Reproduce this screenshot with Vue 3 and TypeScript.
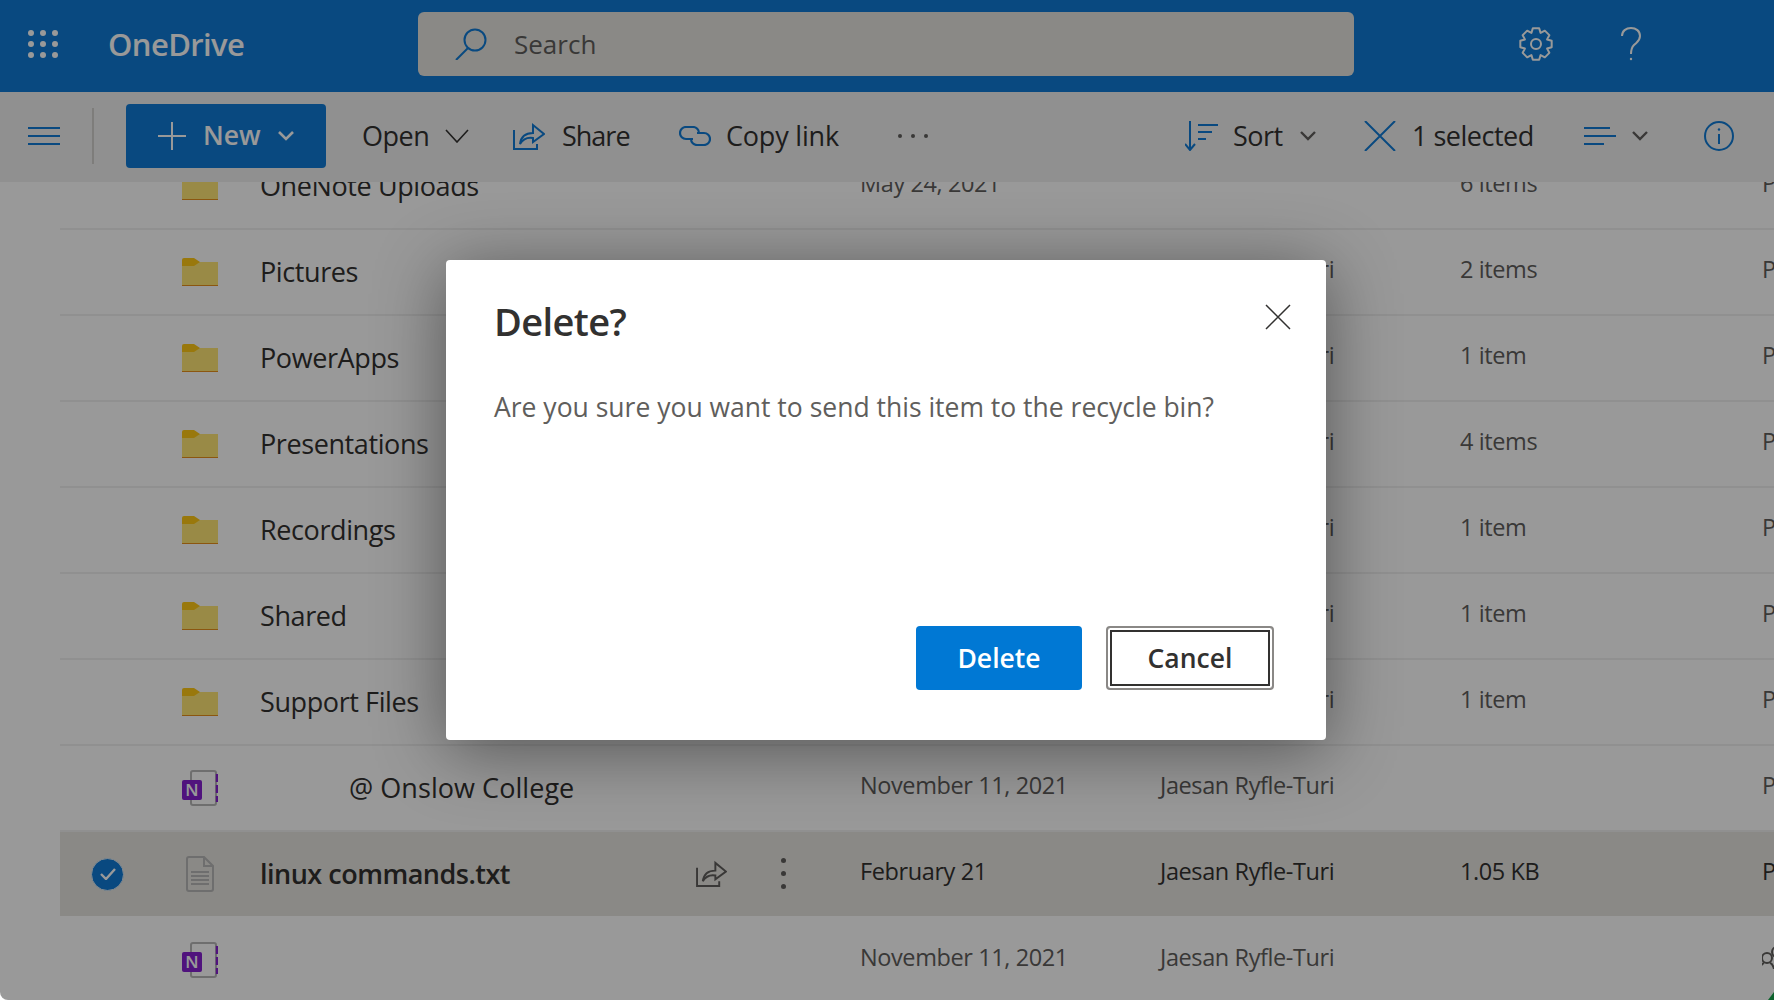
<template>
  <div class="page">
    <header class="suite">
      <button class="waffle">
        <span v-for="n in 9" :key="n" class="dot"></span>
      </button>
      <span class="brand">OneDrive</span>
      <div class="search">
        <svg class="search-icon" viewBox="0 0 33 32" width="33" height="32" fill="none" stroke="#107bd5" stroke-width="2">
          <circle cx="21" cy="12" r="10.5" />
          <path d="M14 20 L2 32" />
        </svg>
        <span class="search-text">Search</span>
      </div>
      <svg class="gear" viewBox="0 0 34 34" width="34" height="34" fill="none" stroke="#fff" stroke-width="2" stroke-linejoin="round">
        <path :d="gearPath" />
        <circle cx="17" cy="17" r="5" />
      </svg>
      <svg class="help" viewBox="0 0 22 34" width="22" height="34" fill="none" stroke="#fff" stroke-width="2">
        <path d="M2 9 C2 4 6 1 11 1 C16 1 20 4 20 9 C20 14 17 15 14 18 C12 20 11 22 11 27" />
        <circle cx="11" cy="32" r="1.2" fill="#fff" stroke="none" />
      </svg>
    </header>

    <nav class="commands">
      <svg class="hamburger" viewBox="0 0 32 20" width="32" height="20" fill="none" stroke="#107bd5" stroke-width="2">
        <path d="M0 2 H32 M0 10 H32 M0 18 H32" />
      </svg>
      <span class="divider"></span>
      <button class="new-btn">
        <svg viewBox="0 0 28 28" width="28" height="28" fill="none" stroke="#fff" stroke-width="2">
          <path d="M14 0 V28 M0 14 H28" />
        </svg>
        <span class="new-label">New</span>
        <svg viewBox="0 0 16 10" width="16" height="10" fill="none" stroke="#fff" stroke-width="2.6">
          <path d="M1 1 L8 8 L15 1" />
        </svg>
      </button>
      <span class="cmd open">Open</span>
      <svg class="open-chev" viewBox="0 0 24 14" width="24" height="14" fill="none" stroke="#323130" stroke-width="1.6">
        <path d="M1 1 L12 13 L23 1" />
      </svg>
      <svg class="share-icon" viewBox="0 0 32 28" width="32" height="28" fill="none" stroke="#107bd5" stroke-width="2">
        <path d="M1 8 V27 H24 V22" />
        <path d="M7 22 C8 14 13 11 20 11 V3 L31 12 L20 20 V16 C14 15 10 17 7 22 Z" />
      </svg>
      <span class="cmd share">Share</span>
      <svg class="link-icon" viewBox="0 0 32 20" width="32" height="20" fill="none" stroke="#107bd5" stroke-width="2.2">
        <path d="M14 13 H7 A6 6 0 0 1 7 1 H14 A6 6 0 0 1 20 7" />
        <path d="M18 7 H25 A6 6 0 0 1 25 19 H18 A6 6 0 0 1 12 13" />
      </svg>
      <span class="cmd copy">Copy link</span>
      <span class="more"><i></i><i></i><i></i></span>

      <svg class="sort-icon" viewBox="0 0 33 30" width="33" height="30" fill="none" stroke="#107bd5" stroke-width="2">
        <path d="M5 0 V28 M0 23 L5 29 L10 23" />
        <path d="M13 4 H33 M13 11 H27 M13 18 H21" />
      </svg>
      <span class="cmd sort">Sort</span>
      <svg class="small-chev sort-chev" viewBox="0 0 16 10" width="16" height="10" fill="none" stroke="#605e5c" stroke-width="2.4">
        <path d="M1 1 L8 8 L15 1" />
      </svg>
      <svg class="clear" viewBox="0 0 32 30" width="32" height="30" fill="none" stroke="#107bd5" stroke-width="2">
        <path d="M1 0 L31 30 M31 0 L1 30" />
      </svg>
      <span class="cmd selected">1 selected</span>
      <svg class="view" viewBox="0 0 32 18" width="32" height="18" fill="none" stroke="#107bd5" stroke-width="2">
        <path d="M0 1 H26 M0 9 H32 M0 17 H20" />
      </svg>
      <svg class="small-chev view-chev" viewBox="0 0 16 10" width="16" height="10" fill="none" stroke="#605e5c" stroke-width="2.4">
        <path d="M1 1 L8 8 L15 1" />
      </svg>
      <svg class="info" viewBox="0 0 30 30" width="30" height="30" fill="none" stroke="#107bd5" stroke-width="2">
        <circle cx="15" cy="15" r="14" />
        <path d="M15 13 V23" />
        <circle cx="15" cy="8.5" r="1.2" fill="#107bd5" stroke="none" />
      </svg>
    </nav>

    <div class="list">
      <div class="rows">
        <div v-for="row in rows" :key="row.name + row.kind" class="row" :class="{ picked: row.picked }">
          <div class="check">
            <span v-if="row.picked" class="tick">
              <svg viewBox="0 0 16 12" width="16" height="12" fill="none" stroke="#fff" stroke-width="2.4">
                <path d="M1 6 L6 11 L15 1" />
              </svg>
            </span>
          </div>
          <div class="type">
            <svg v-if="row.kind === 'folder'" viewBox="0 0 36 28" width="36" height="28">
              <path d="M1 4 H36 V27 H0 V4 Z" fill="#ffe675" />
              <path d="M0 2 Q0 0 2 0 H12 L18 4 L12 8 H0 Z" fill="#ffc814" />
              <path d="M0 27 H36 V28 H0 Z" fill="#e88f1c" />
            </svg>
            <svg v-else-if="row.kind === 'note'" viewBox="0 0 36 36" width="36" height="36">
              <rect x="9" y="1" width="25" height="34" rx="2" fill="#fff" stroke="#b7b7b7" stroke-width="2" />
              <path d="M35 4 V12 M35 15 V23 M35 26 V32" stroke="#8521d0" stroke-width="2.4" />
              <rect x="0" y="10" width="20" height="20" rx="2" fill="#8521d0" />
              <text x="10" y="26" text-anchor="middle" class="note-n">N</text>
            </svg>
            <svg v-else viewBox="0 0 28 36" width="28" height="36" class="file-icon" fill="none" stroke="#b7b7b7" stroke-width="2">
              <path d="M1 3 Q1 1 3 1 H18 L27 10 V33 Q27 35 25 35 H3 Q1 35 1 33 Z" />
              <path d="M18 1 V10 H27" />
              <path d="M5 16 H23 M5 20 H23 M5 24 H23 M5 28 H23" stroke-width="1.8" />
            </svg>
          </div>
          <div class="name-cell">
            <span class="name" :class="{ indented: row.indent, strong: row.picked }">{{ row.name }}</span>
            <span v-if="row.picked" class="row-actions">
              <svg viewBox="0 0 32 28" width="31" height="27" fill="none" stroke="#605e5c" stroke-width="2">
                <path d="M1 8 V27 H24 V22" />
                <path d="M7 22 C8 14 13 11 20 11 V3 L31 12 L20 20 V16 C14 15 10 17 7 22 Z" />
              </svg>
              <span class="kebab"><i></i><i></i><i></i></span>
            </span>
          </div>
          <div class="cell">{{ row.date }}</div>
          <div class="cell">{{ row.by }}</div>
          <div class="cell">{{ row.size }}</div>
          <div class="cell sharing">
            <svg v-if="row.shared" class="people" viewBox="0 0 24 24" width="24" height="24" fill="none" stroke="#605e5c" stroke-width="2">
              <circle cx="7" cy="13" r="5" />
              <circle cx="17" cy="7" r="5" />
              <path d="M0 24 Q1 19 4 18 M14 24 Q13 19 10 18" />
            </svg>
            <template v-else>Private</template>
          </div>
        </div>
      </div>
    </div>

    <span class="corner-mark"></span>

    <div class="overlay">
      <div class="dialog">
        <svg class="close" viewBox="0 0 26 26" width="26" height="26" fill="none" stroke="#323130" stroke-width="1.5">
          <path d="M1 1 L25 25 M25 1 L1 25" />
        </svg>
        <h1 class="title">Delete?</h1>
        <p class="message">Are you sure you want to send this item to the recycle bin?</p>
        <div class="actions">
          <button class="btn primary">Delete</button>
          <button class="btn secondary">Cancel</button>
        </div>
      </div>
    </div>
  </div>
</template>

<script setup lang="ts">
interface Row {
  name: string
  kind: 'folder' | 'note' | 'file'
  date?: string
  by?: string
  size?: string
  indent?: boolean
  picked?: boolean
  shared?: boolean
}

const author = 'Jaesan Ryfle-Turi'

const rows: Row[] = [
  { name: 'OneNote Uploads', kind: 'folder', date: 'May 24, 2021', size: '6 items' },
  { name: 'Pictures', kind: 'folder', by: author, size: '2 items' },
  { name: 'PowerApps', kind: 'folder', by: author, size: '1 item' },
  { name: 'Presentations', kind: 'folder', by: author, size: '4 items' },
  { name: 'Recordings', kind: 'folder', by: author, size: '1 item' },
  { name: 'Shared', kind: 'folder', by: author, size: '1 item' },
  { name: 'Support Files', kind: 'folder', by: author, size: '1 item' },
  { name: '@ Onslow College', kind: 'note', date: 'November 11, 2021', by: author, indent: true },
  { name: 'linux commands.txt', kind: 'file', date: 'February 21', by: author, size: '1.05 KB', picked: true },
  { name: '', kind: 'note', date: 'November 11, 2021', by: author, shared: true }
]

// eight toothed outline for the settings cog
function buildGear(): string {
  const pts: string[] = []
  for (let i = 0; i < 8; i++) {
    const a = (i * Math.PI) / 4
    const spots: [number, number][] = [
      [-0.39, 12],
      [-0.2, 16],
      [0.2, 16],
      [0.39, 12]
    ]
    for (const [off, r] of spots) {
      pts.push(`${(17 + r * Math.sin(a + off)).toFixed(2)} ${(17 - r * Math.cos(a + off)).toFixed(2)}`)
    }
  }
  return 'M' + pts.join(' L') + ' Z'
}

const gearPath = buildGear()
</script>

<style scoped>
.page {
  position: relative;
  width: 1774px;
  height: 1000px;
  overflow: hidden;
  background: #fff;
  border-bottom-left-radius: 8px;
  font-family: "Open Sans", "Noto Sans", sans-serif;
  color: #323130;
}
button {
  font-family: inherit;
  border: none;
  padding: 0;
  background: none;
}

/* top bar */
.suite {
  height: 92px;
  box-sizing: border-box;
  padding-bottom: 4px;
  background: #107bd5;
  display: flex;
  align-items: center;
  color: #fff;
}
.waffle {
  width: 30px;
  height: 28px;
  margin-left: 28px;
  display: grid;
  grid-template-columns: repeat(3, 6px);
  grid-template-rows: repeat(3, 6px);
  justify-content: space-between;
  align-content: space-between;
}
.dot {
  background: #fff;
  border-radius: 50%;
}
.brand {
  margin-left: 50px;
  font-size: 31px;
  font-weight: 600;
  width: 310px;
  letter-spacing: -0.6px;
}
.search {
  width: 936px;
  height: 64px;
  border-radius: 6px;
  background: #e6e4df;
  display: flex;
  align-items: center;
  box-sizing: border-box;
  padding-left: 36px;
}
.search-text {
  margin-left: 27px;
  font-size: 26px;
  color: #605e5c;
}
.gear {
  margin-left: 165px;
}
.help {
  margin-left: 67px;
}

/* command bar */
.commands {
  position: relative;
  z-index: 1;
  height: 90px;
  box-sizing: border-box;
  padding-bottom: 2px;
  background: #f0f0f0;
  display: flex;
  align-items: center;
  font-size: 27px;
}
.hamburger {
  margin-left: 28px;
}
.divider {
  width: 2px;
  height: 56px;
  background: #d2d0ce;
  margin-left: 32px;
}
.new-btn {
  margin-left: 32px;
  width: 200px;
  height: 64px;
  border-radius: 4px;
  background: #107bd5;
  color: #fff;
  font-size: 26.5px;
  font-weight: 600;
  display: flex;
  align-items: center;
  padding-left: 32px;
  box-sizing: border-box;
}
.new-label {
  margin-left: 17px;
  margin-right: 17px;
  padding-bottom: 2px;
}
.cmd {
  white-space: nowrap;
  letter-spacing: -0.5px;
  padding-bottom: 2px;
}
.open {
  margin-left: 36px;
  width: 83px;
}
.share-icon {
  margin-left: 44px;
}
.open-chev {
  flex: none;
}
.share {
  margin-left: 17px;
  width: 117px;
  letter-spacing: -1px;
}
.copy {
  margin-left: 15px;
  width: 172px;
  letter-spacing: -0.2px;
}
.more {
  width: 30px;
  display: flex;
  justify-content: space-between;
}
.more i,
.kebab i {
  display: block;
  width: 4px;
  height: 4px;
  border-radius: 50%;
  background: #605e5c;
}
.sort-icon {
  margin-left: 257px;
}
.sort {
  margin-left: 15px;
  width: 67px;
}
.clear {
  margin-left: 48px;
}
.selected {
  margin-left: 16px;
  width: 172px;
}
.view-chev {
  margin-left: 16px;
}
.info {
  margin-left: 56px;
}

/* file list */
.list {
  height: 818px;
  overflow: hidden;
}
.rows {
  margin-top: -38px;
  margin-left: 60px;
}
.row {
  height: 86px;
  box-sizing: border-box;
  border-bottom: 2px solid #f0f0f0;
  display: grid;
  grid-template-columns: 120px 80px 600px 300px 300px 302px 1fr;
  align-items: center;
  font-size: 23.5px;
  color: #605e5c;
}
.row.picked {
  background: #e6e4df;
  border-bottom-color: #fff;
  color: #323130;
}
.check {
  padding-left: 31px;
}
.tick {
  width: 33px;
  height: 33px;
  border-radius: 50%;
  background: #107bd5;
  border: 1px solid #d8e6f2;
  box-sizing: border-box;
  display: flex;
  align-items: center;
  justify-content: center;
}
.type {
  display: flex;
  align-items: center;
  padding-left: 2px;
}
.file-icon {
  margin-left: 4px;
}
.note-n {
  font-family: "Open Sans", sans-serif;
  font-size: 17px;
  font-weight: 600;
  fill: #fff;
}
.name-cell {
  display: flex;
  align-items: center;
  justify-content: space-between;
  color: #323130;
  font-size: 27px;
  height: 36px;
  padding-bottom: 2px;
}
.name {
  letter-spacing: -0.4px;
}
.indented {
  margin-left: 89px;
  letter-spacing: 0.05px;
}
.strong {
  font-weight: 600;
  letter-spacing: -0.5px;
}
.row-actions {
  display: flex;
  align-items: center;
  gap: 54px;
  padding-right: 74px;
}
.kebab {
  display: flex;
  flex-direction: column;
  gap: 8px;
}
.kebab i {
  width: 5px;
  height: 5px;
}
.cell {
  padding-bottom: 6px;
  white-space: nowrap;
  letter-spacing: -0.4px;
}
.sharing {
  overflow: hidden;
}
.people {
  display: block;
  margin-left: -2px;
}

.corner-mark {
  position: absolute;
  right: 0;
  bottom: 0;
  width: 6px;
  height: 8px;
  background: #14a34a;
  clip-path: polygon(100% 0, 100% 100%, 0 100%);
}

/* dialog */
.overlay {
  position: absolute;
  inset: 0;
  z-index: 2;
  background: rgba(0, 0, 0, 0.4);
  display: flex;
  align-items: center;
  justify-content: center;
}
.dialog {
  position: relative;
  width: 880px;
  height: 480px;
  margin-right: 2px;
  box-sizing: border-box;
  padding: 36px 52px 50px 48px;
  background: #fff;
  border-radius: 4px;
  box-shadow: 0 10px 70px rgba(0, 0, 0, 0.45);
  display: flex;
  flex-direction: column;
}
.close {
  position: absolute;
  top: 44px;
  right: 35px;
}
.title {
  margin: 0;
  font-size: 38px;
  line-height: 50px;
  font-weight: 600;
  letter-spacing: -0.6px;
}
.message {
  margin: 43px 0 0;
  font-size: 26.5px;
  line-height: 36px;
  color: #605e5c;
}
.actions {
  margin-top: auto;
  display: flex;
  justify-content: flex-end;
  gap: 24px;
}
.btn {
  height: 64px;
  font-size: 26.5px;
  font-weight: 600;
  border-radius: 4px;
  box-sizing: border-box;
}
.primary {
  width: 166px;
  background: #0078d4;
  color: #fff;
}
.secondary {
  width: 168px;
  background: #fff;
  color: #323130;
  border: 2px solid #8a8886;
  box-shadow: inset 0 0 0 2px #fff, inset 0 0 0 4px #323130;
}
</style>

<style>
body {
  background: #fff;
}
</style>
